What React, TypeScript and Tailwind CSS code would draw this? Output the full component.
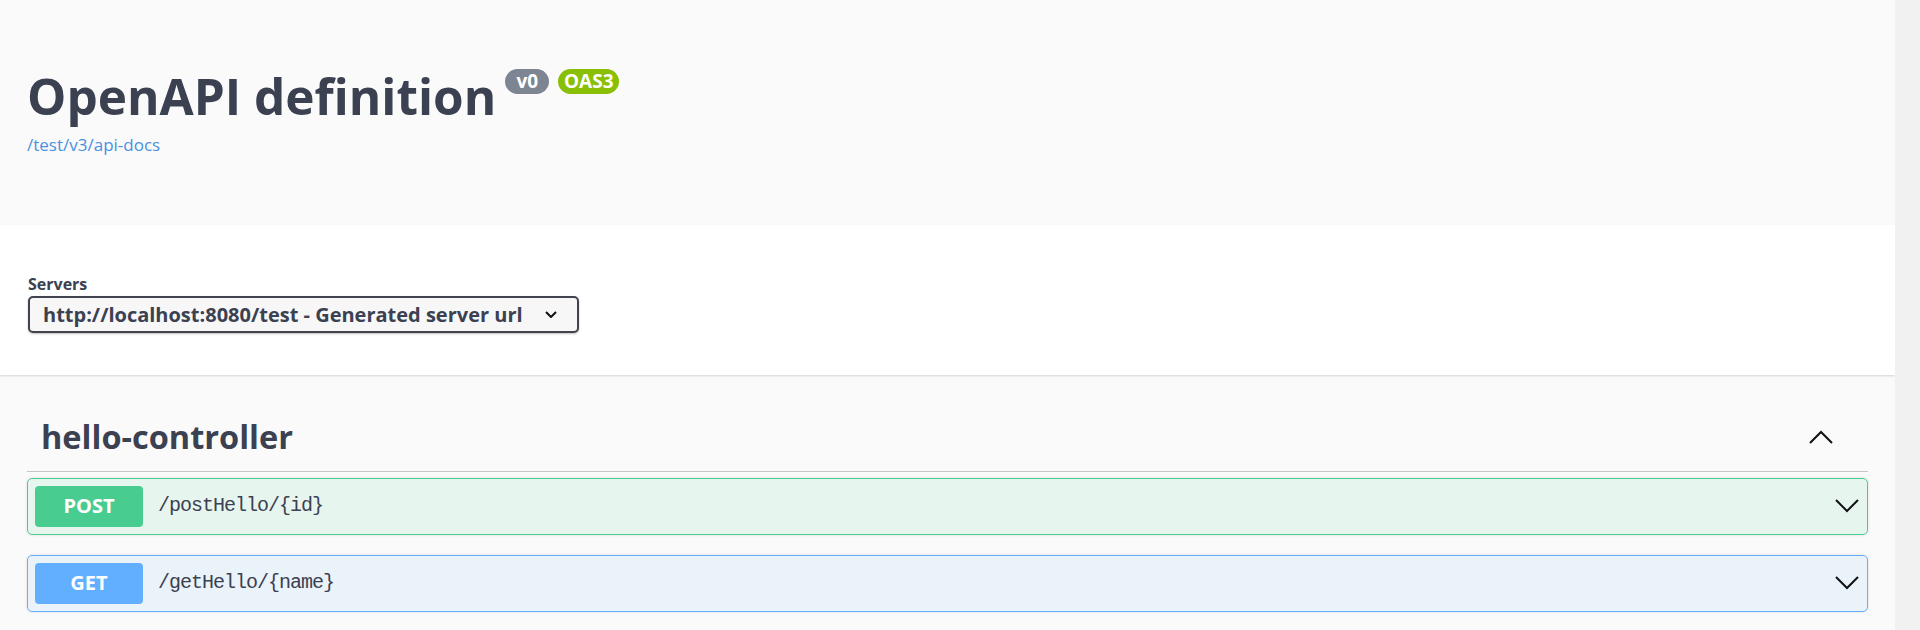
import React from 'react';

type Method = 'POST' | 'GET';

interface Operation {
  method: Method;
  path: string;
}

const operations: Operation[] = [
  { method: 'POST', path: '/postHello/{id}' },
  { method: 'GET', path: '/getHello/{name}' },
];

const methodStyles: Record<Method, { block: string; badge: string }> = {
  POST: {
    block: 'border-[#49cc90] bg-[rgba(73,204,144,0.1)]',
    badge: 'bg-[#49cc90]',
  },
  GET: {
    block: 'border-[#61affe] bg-[rgba(97,175,254,0.1)]',
    badge: 'bg-[#61affe]',
  },
};

function ChevronDown() {
  return (
    <svg width="24" height="14" viewBox="0 0 24 14" fill="none" className="text-[#111]">
      <polyline points="1,1 12,12 23,1" stroke="currentColor" strokeWidth="2" />
    </svg>
  );
}

function ChevronUp() {
  return (
    <svg width="24" height="14" viewBox="0 0 24 14" fill="none" className="text-[#111]">
      <polyline points="1,13 12,2 23,13" stroke="currentColor" strokeWidth="2" />
    </svg>
  );
}

function OperationBlock({ op }: { op: Operation }) {
  const s = methodStyles[op.method];
  return (
    <div
      className={`flex h-[57px] items-center rounded-[5px] border pl-[7px] pr-[8px] shadow-[0_0_3px_rgba(0,0,0,0.12)] ${s.block}`}
    >
      <span
        className={`flex h-[41px] w-[108px] items-center justify-center rounded-[4px] text-[20px] font-bold text-white ${s.badge}`}
      >
        {op.method}
      </span>
      <span className="ml-[15px] flex-1 font-['Liberation_Mono',monospace] text-[20px] tracking-[-1px] text-[#3b4151]">
        {op.path}
      </span>
      <ChevronDown />
    </div>
  );
}

export default function App() {
  return (
    <div className="flex min-h-[630px] bg-[#fafafa] font-['Open_Sans',sans-serif] text-[#3b4151]">
      <div className="flex-1">
        {/* Info header */}
        <header className="h-[225px] px-[27px] pt-[72px]">
          <div className="flex items-start">
            <h1 className="text-[49.5px] font-bold leading-none">OpenAPI definition</h1>
            <span className="-mt-[3px] ml-[9px] flex h-[25px] w-[44px] items-center justify-center rounded-full bg-[#7d8492] text-[19px] font-bold leading-none text-white">
              v0
            </span>
            <span className="-mt-[3px] ml-[9px] flex h-[25px] w-[61px] items-center justify-center rounded-full bg-[#89bf04] text-[19px] font-bold leading-none text-white">
              OAS3
            </span>
          </div>
          <a className="mt-[14px] block text-[17px] leading-none text-[#4990e2]">/test/v3/api-docs</a>
        </header>

        {/* Servers */}
        <section className="h-[150px] bg-white px-[28px] pt-[51px] shadow-[0_1px_2px_rgba(0,0,0,0.15)]">
          <label className="block text-[16px] font-bold leading-none">Servers</label>
          <div className="mt-[4px] flex h-[37px] w-[551px] items-center justify-between rounded-[5px] border-2 border-[#41444e] bg-[#f7f7f7] pl-[13px] pr-[20px] shadow-[0_1px_2px_rgba(0,0,0,0.25)]">
            <span className="text-[20px] font-bold leading-none">
              http://localhost:8080/test - Generated server url
            </span>
            <svg width="12" height="7" viewBox="0 0 12 7" fill="none">
              <polyline points="1,1 6,6 11,1" stroke="#111" strokeWidth="2" />
            </svg>
          </div>
        </section>

        {/* Operations */}
        <section className="px-[27px] pt-[29px]">
          <div className="flex items-center justify-between border-b border-[#c4c5ca] pb-[17px] pl-[14px] pr-[35px] pt-[17px]">
            <h3 className="text-[32.5px] font-bold leading-none">hello-controller</h3>
            <ChevronUp />
          </div>
          <div className="mt-[6px] flex flex-col gap-[20px]">
            {operations.map((op) => (
              <OperationBlock key={op.path} op={op} />
            ))}
          </div>
        </section>
      </div>
      <div className="w-[25px] bg-[#f1f1f1]" />
    </div>
  );
}
